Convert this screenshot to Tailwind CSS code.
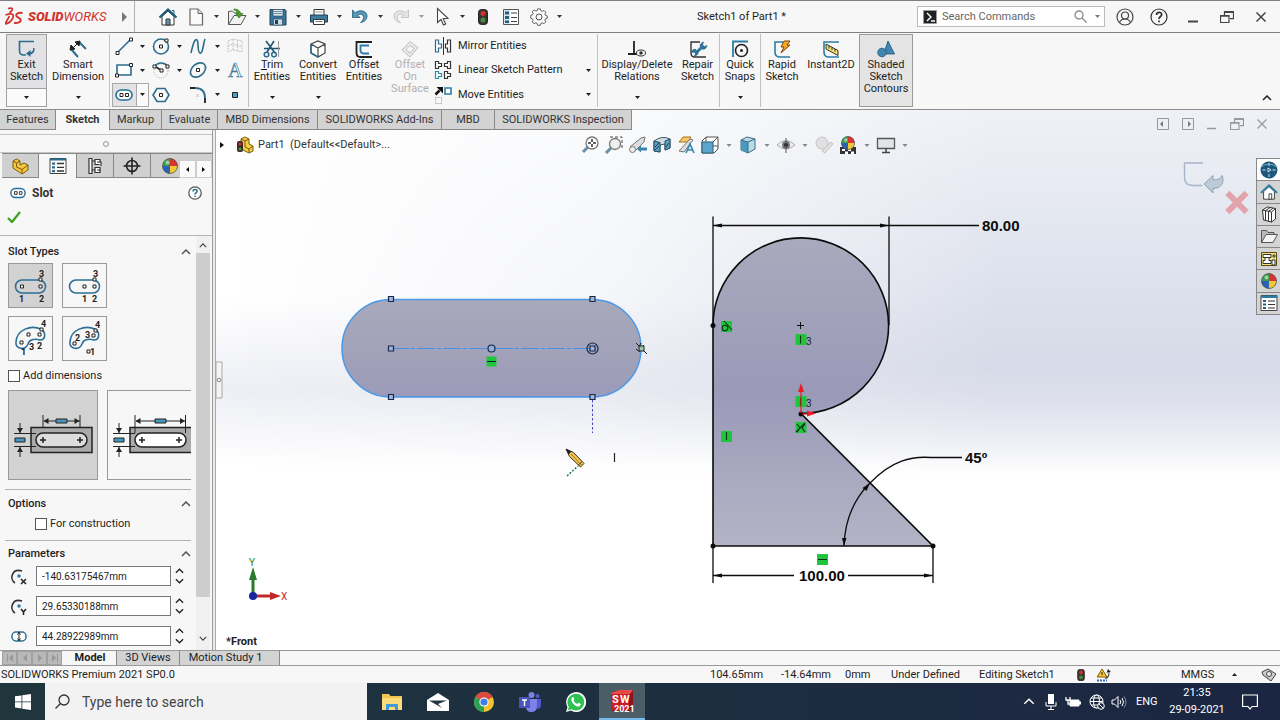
<!DOCTYPE html>
<html lang="en">

<head>
    <meta charset="UTF-8">
    <meta name="viewport" content="width=device-width, initial-scale=1.0">
    <title>SOLIDWORKS - Sketch1 of Part1</title>
    <script src="https://cdn.jsdelivr.net/npm/@tailwindcss/browser@4"></script>
</head>

<body class="h-screen overflow-hidden flex flex-col bg-[#f7f7f7] text-[#1e1e1e] text-[11px] leading-3 font-['Roboto','Open_Sans',sans-serif]">

    <!-- Shared symbols -->
    <svg class="hidden">
        <symbol id="caret" viewBox="0 0 5 3"><path d="M0 0h5L2.500 3z" fill="currentColor" /></symbol>
        <symbol id="slot" viewBox="0 0 18 12">
            <rect x="1" y="1" width="16" height="10" rx="5" fill="#fff" stroke="#1f6f9c" stroke-width="1.600" />
            <path d="M5 4.500h3v3H5zM10.500 4.500h3v3h-3z" fill="#fff" stroke="#222" />
        </symbol>
        <symbol id="up" viewBox="0 0 10 6"><path d="M1 5l4-4 4 4" fill="none" stroke="currentColor" stroke-width="1.500" /></symbol>
        <symbol id="down" viewBox="0 0 10 6"><path d="M1 1l4 4 4-4" fill="none" stroke="currentColor" stroke-width="1.500" /></symbol>
        <symbol id="traffic" viewBox="0 0 10 16">
            <rect x="0.500" y="0.500" width="9" height="15" rx="3" fill="#3b3331" stroke="#222" />
            <circle cx="5" cy="4.500" r="2.500" fill="#c8352b" />
            <circle cx="5" cy="11" r="2.500" fill="#3f8f3d" />
        </symbol>
        <symbol id="ball" viewBox="0 0 16 16">
            <circle cx="8" cy="8" r="7.500" fill="#2c62b4" />
            <path d="M8 8L8 .5A7.500 7.500 0 0 0 .5 8z" fill="#3aa14a" />
            <path d="M8 8L.5 8A7.500 7.500 0 0 0 8 15.500z" fill="#2c62b4" />
            <path d="M8 8V.5A7.500 7.500 0 0 1 15.500 8z" fill="#d93430" />
            <path d="M8 8h7.500A7.500 7.500 0 0 1 8 15.500z" fill="#efc832" />
            <circle cx="8" cy="8" r="7.500" fill="none" stroke="#444" stroke-width=".6" />
            <circle cx="5.500" cy="4.500" r="2" fill="#fff" opacity=".5" />
        </symbol>
        <symbol id="restore" viewBox="0 0 14 12">
            <path d="M4.500 4V.6h9v7H10M.5 4.500h8.500v7H.5z" fill="none" stroke="currentColor" stroke-width="1.200" />
            <path d="M4.500 1.200h9M.5 5h8.500" stroke="currentColor" stroke-width="1.500" />
        </symbol>
    </svg>

    <!-- Title bar -->
    <header class="h-[33px] shrink-0 flex items-center border-t border-b border-[#808080]">
        <div class="w-[135px] h-full flex items-center border-r border-[#b0b0b0] pl-[5px] text-[#d0342c]">
            <svg class="w-[18px] h-5" viewBox="0 0 18 20" fill="none" stroke="currentColor" stroke-width="1.700">
                <path d="M3 1.500c5-1 6 .5 1.500 4.500M.5 8c7-2.500 9-.5 7 3.500-1.500 3-4.500 5-7.500 5.500L4.500 9" />
                <path d="M17.500 6c-3.500-.8-6.300.3-6.300 2.300 0 2.400 4.800 2.400 4.600 5-.2 2.300-4.300 3.200-6.800 2.400" stroke-width="2" />
            </svg>
            <span class="ml-[5px] text-[13px] italic"><b class="font-black">SOLID</b>WORKS</span>
            <svg class="ml-auto mr-[7px] w-[5px] h-2.5" viewBox="0 0 5 10"><path d="M0 0l5 5-5 5z" fill="#777" /></svg>
        </div>
        <div class="flex items-center gap-2 pl-[23px] text-[#333]">
            <button aria-label="Home"><svg class="w-5 h-5" viewBox="0 0 20 20">
                <path d="M4 9.500V18h12V9.500L10 4z" fill="#fff" stroke="#333" />
                <path d="M1.500 10.500L10 2.500l8.500 8" fill="none" stroke="#1c5b7c" stroke-width="2.200" />
                <path d="M14 3.500h2V7" fill="none" stroke="#1c5b7c" /><path d="M8 18v-6h4v6z" fill="#5e93b0" stroke="#333" /></svg></button>
            <button aria-label="New"><svg class="w-5 h-5" viewBox="0 0 20 20"><path d="M4 2h8l4.500 4.500V18H4z" fill="#fafafa" stroke="#666" stroke-width="1.200" /><path d="M12 2v4.500h4.500" fill="#ddd" stroke="#666" /></svg></button>
            <svg class="w-[5px] h-[3px]"><use href="#caret" /></svg>
            <button aria-label="Open"><svg class="w-5 h-5" viewBox="0 0 20 20"><path d="M1.500 17.500V4.500l4-.5 2 2h6v3" fill="#eee" stroke="#555" /><path d="M1.500 17.500L7 8.500h12l-5 9z" fill="#f1f1ee" stroke="#555" /><path d="M7 2c4 0 6 1.500 6.500 4.500h2.500L12 11 8.500 6.500h2C10 4.500 9 3.500 7 3z" fill="#48a12c" stroke="#2c6d1b" stroke-width=".6" /></svg></button>
            <svg class="w-[5px] h-[3px]"><use href="#caret" /></svg>
            <button aria-label="Save"><svg class="w-5 h-5" viewBox="0 0 20 20"><path d="M2 2.500h15l1 1V18H2z" fill="#37759a" stroke="#1f4257" /><path d="M5 2.500h10V9H5z" fill="#dfe9ee" stroke="#1f4257" stroke-width=".6" /><path d="M5.500 4.500h9M5.500 6.500h9" stroke="#6b8da0" /><path d="M5.500 12h9v6h-9z" fill="#cfdbe2" stroke="#1f4257" stroke-width=".6" /><path d="M7 13h3v4H7z" fill="#1f4257" /></svg></button>
            <svg class="w-[5px] h-[3px]"><use href="#caret" /></svg>
            <button aria-label="Print"><svg class="w-5 h-5" viewBox="0 0 20 20"><path d="M5 8V2.500h10V8" fill="#fff" stroke="#333" /><path d="M1.500 8h17v7h-17z" fill="#3e7c9e" stroke="#1d3f54" /><path d="M4.500 12.500h11v5h-11z" fill="#fff" stroke="#333" /><path d="M6.500 14.500h7" stroke="#777" /><path d="M6.500 5h7" stroke="#999" /></svg></button>
            <svg class="w-[5px] h-[3px]"><use href="#caret" /></svg>
            <button aria-label="Undo"><svg class="w-5 h-5" viewBox="0 0 20 20"><path d="M2.500 3v7.500H10L7.500 8c3-1.800 6-.5 6 2.500 0 2-1 3.500-3 5 4-.5 6.500-3 6.500-6.500C17 4 10 2 5.300 5.700z" fill="#5697b8" stroke="#215a78" stroke-width=".8" /></svg></button>
            <svg class="w-[5px] h-[3px]"><use href="#caret" /></svg>
            <button aria-label="Redo"><svg class="w-5 h-5" viewBox="0 0 20 20"><path d="M17.500 3v7.500H10L12.500 8c-3-1.800-6-.5-6 2.500 0 2 1 3.500 3 5C5.500 15 3 12.500 3 9c0-5 7-7 11.700-3.300z" fill="#e4e4e4" stroke="#bbb" stroke-width=".8" /></svg></button>
            <svg class="w-[5px] h-[3px] text-[#999]"><use href="#caret" /></svg>
            <button aria-label="Select"><svg class="w-5 h-5" viewBox="0 0 20 20"><path d="M5.500 1.500v14l3.500-3 2.500 5.500 2.200-1-2.500-5.300 4.800-.4z" fill="#fff" stroke="#444" stroke-width="1.100" /></svg></button>
            <svg class="w-[5px] h-[3px]"><use href="#caret" /></svg>
            <button aria-label="Rebuild"><svg class="w-5 h-4"><use href="#traffic" /></svg></button>
            <button aria-label="File properties"><svg class="w-5 h-5" viewBox="0 0 20 20"><path d="M2.500 2.500h15v15h-15z" fill="#fff" stroke="#555" /><path d="M3 3h6v14H3z" fill="#dbe7ee" /><path d="M4 4.500h4v3H4zM4 9h4v3H4zM4 13.500h4V16H4z" fill="#245f80" /><path d="M10 6h6M10 10.500h6M10 14.500h6" stroke="#444" stroke-width="1.200" /></svg></button>
            <button aria-label="Options"><svg class="w-5 h-5" viewBox="0 0 20 20" fill="#fafafa" stroke="#555"><path d="M8.500 2.500h3l.5 2 1.600.7 1.800-1.100 2 2-1 1.900.6 1.500 2 .6v2.600l-2 .6-.7 1.500 1.100 1.900-2 2-1.800-1.100-1.600.7-.5 2h-3l-.5-2-1.600-.7-1.800 1.100-2-2 1-1.900-.6-1.500-2-.6V9.600l2-.6.7-1.500-1.100-1.900 2-2 1.800 1.100L8 4.500z" transform="translate(.8 -.4) scale(.92)" /><circle cx="10" cy="10" r="3" /></svg></button>
            <svg class="w-[5px] h-[3px]"><use href="#caret" /></svg>
        </div>
        <h1 class="flex-1 text-center pl-1">Sketch1 of Part1 *</h1>
        <label class="w-[188px] h-[21px] flex items-center border border-[#bbb] bg-white pl-[5px] pr-1">
            <svg class="w-[14px] h-[14px]" viewBox="0 0 14 14"><path d="M.5.5h13v13H.5z" fill="#222" stroke="#999" /><path d="M4 3l4 4-4 4M8 11h4" stroke="#fff" stroke-width="1.400" fill="none" /></svg>
            <input type="text" aria-label="Search Commands" placeholder="Search Commands" class="flex-1 min-w-0 ml-[5px] outline-none placeholder:text-[#666]">
            <svg class="w-[13px] h-[13px] mr-2" viewBox="0 0 13 13" fill="none" stroke="#8a8a8a" stroke-width="1.300"><circle cx="5" cy="5" r="4" /><path d="M8 8l4.500 4.500" /></svg>
            <svg class="w-[5px] h-[3px] text-[#777]"><use href="#caret" /></svg>
        </label>
        <div class="flex items-center pl-[3px] pr-0.5 text-[#444]">
            <button class="w-[34px] flex justify-center" aria-label="Account"><svg class="w-[18px] h-[18px]" viewBox="0 0 18 18" fill="none" stroke="currentColor" stroke-width="1.200"><circle cx="9" cy="9" r="8" /><circle cx="9" cy="7.500" r="3.500" /><path d="M3.500 14.500c1-2.500 3-3.500 5.500-3.500s4.500 1 5.500 3.500" /></svg></button>
            <button class="w-[34px] flex justify-center" aria-label="Help"><svg class="w-[18px] h-[18px]" viewBox="0 0 18 18" fill="none" stroke="#333" stroke-width="1.200"><circle cx="9" cy="9" r="8" /><path d="M6.500 7c0-3.500 5.200-3.300 5.200-.4C11.700 8.500 9 8.600 9 11M9 12.500v1.800" stroke-width="1.700" /></svg></button>
            <button class="w-[34px] flex justify-center" aria-label="Minimize"><svg class="w-[10px] h-3" viewBox="0 0 10 12"><path d="M0 10.500h10" stroke="currentColor" stroke-width="2" /></svg></button>
            <button class="w-[34px] flex justify-center" aria-label="Restore"><svg class="w-[14px] h-3"><use href="#restore" /></svg></button>
            <button class="w-[34px] flex justify-center" aria-label="Close"><svg class="w-[10px] h-[10px]" viewBox="0 0 10 10"><path d="M.5.5l9 9M9.500.5l-9 9" stroke="currentColor" stroke-width="1.500" /></svg></button>
        </div>
    </header>

    <!-- Command ribbon -->
    <nav class="h-[77px] shrink-0 flex border-b border-[#8c8c8c] pl-1.5 pt-px pb-0.5">
        <button class="w-[41px] flex flex-col items-center border border-[#a0a0a0] bg-[#e2e2e4]">
            <svg class="w-5 h-5 mt-1" viewBox="0 0 20 20"><path d="M17 2.500H2.500V12q0 4 4.500 4h2" fill="none" stroke="#2c6c8e" stroke-width="1.600" /><path d="M17.500 9c.5 4-1.500 6-4 6.500V18L9 14.500l4.500-3.500v2.200c2-.5 3-2 2.500-4.200z" fill="#2c6c8e" /></svg>
            <span>Exit<br>Sketch</span>
            <span class="mt-auto w-full h-[18px] flex items-center justify-center bg-[#fafafa] border-t border-[#a0a0a0]"><svg class="w-[5px] h-[3px]"><use href="#caret" /></svg></span>
        </button>
        <button class="w-[62px] flex flex-col items-center pt-[5px]">
            <svg class="w-5 h-5" viewBox="0 0 20 20"><path d="M3 10l7 8M11 3l7 7" stroke="#2c6c8e" stroke-width="2" /><path d="M4 10l7-7M3 6l-1 5 5-1zM7 3l5-1-1 5z" stroke="#222" fill="#222" /></svg>
            <span>Smart<br>Dimension</span>
            <svg class="w-[5px] h-[3px] mt-[13px]"><use href="#caret" /></svg>
        </button>
        <!-- Sketch entity tools -->
        <div class="w-[140px] border-l border-r border-[#c0c0c0] grid grid-cols-[28px_9px_28px_9px_28px_10px_26px] grid-rows-3 items-center justify-items-center">
            <button aria-label="Line"><svg class="w-5 h-5" viewBox="0 0 20 20"><path d="M3.500 16.500l13-13" stroke="#2c6c8e" stroke-width="1.600" /><path d="M2 15.500h3v3H2zM15.500 2h3v3h-3z" fill="#fff" stroke="#222" /></svg></button>
            <svg class="w-[5px] h-[3px]"><use href="#caret" /></svg>
            <button aria-label="Circle"><svg class="w-5 h-5" viewBox="0 0 20 20"><circle cx="10" cy="10.500" r="7.500" fill="none" stroke="#2c6c8e" stroke-width="1.600" /><path d="M8.500 9h3v3h-3zM14 3h3v3h-3z" fill="#fff" stroke="#222" /></svg></button>
            <svg class="w-[5px] h-[3px]"><use href="#caret" /></svg>
            <button aria-label="Spline"><svg class="w-5 h-5" viewBox="0 0 20 20"><path d="M3 17C5 8 7 2 9 4s0 12 3 13 3-9 5-14" fill="none" stroke="#2c6c8e" stroke-width="1.600" /></svg></button>
            <svg class="w-[5px] h-[3px]"><use href="#caret" /></svg>
            <button aria-label="Plane"><svg class="w-5 h-5" viewBox="0 0 20 20"><path d="M3 5l5-2 9 2v11l-9-2-5 2zM8 3v11M12.500 4v11M3 10l5-2 9 3" fill="none" stroke="#c4c4c4" stroke-dasharray="2 1" /></svg></button>

            <button aria-label="Rectangle"><svg class="w-5 h-5" viewBox="0 0 20 20"><path d="M3 5h14v10H3z" fill="#fff" stroke="#2c6c8e" stroke-width="1.600" /><path d="M1.500 14h3v3h-3zM15.500 3.500h3v3h-3z" fill="#fff" stroke="#222" /></svg></button>
            <svg class="w-[5px] h-[3px]"><use href="#caret" /></svg>
            <button aria-label="Arc"><svg class="w-5 h-5" viewBox="0 0 20 20"><circle cx="10" cy="11" r="7" fill="none" stroke="#aaa" stroke-dasharray="1 1.500" /><path d="M3.500 6.500C7 2 13 2 16.500 6" fill="none" stroke="#2c6c8e" stroke-width="1.600" /><path d="M2 5h3v3H2zM15 5h3v3h-3zM9 9h3v3H9z" fill="#fff" stroke="#222" /><path d="M5 7l4 2.500" stroke="#222" stroke-width="1.500" /></svg></button>
            <svg class="w-[5px] h-[3px]"><use href="#caret" /></svg>
            <button aria-label="Ellipse"><svg class="w-5 h-5" viewBox="0 0 20 20"><ellipse cx="10" cy="10" rx="8.500" ry="6" transform="rotate(-40 10 10)" fill="none" stroke="#2c6c8e" stroke-width="1.600" /><path d="M8.500 8.500h3v3h-3z" fill="#fff" stroke="#222" /></svg></button>
            <svg class="w-[5px] h-[3px]"><use href="#caret" /></svg>
            <button aria-label="Text"><svg class="w-5 h-5" viewBox="0 0 20 20"><text x="3" y="17" font-family="Liberation Serif" font-size="20" fill="#fff" stroke="#3b7797" stroke-width=".7">A</text></svg></button>

            <button aria-label="Slot" class="w-[25px] h-6 flex items-center justify-center border border-[#a8a8a8] bg-[#e2e2e4]"><svg class="w-[18px] h-3"><use href="#slot" /></svg></button>
            <span class="w-3 h-6 flex items-center justify-center border border-l-0 border-[#a8a8a8] bg-[#fafafa]"><svg class="w-[5px] h-[3px]"><use href="#caret" /></svg></span>
            <button aria-label="Polygon"><svg class="w-5 h-5" viewBox="0 0 20 20"><path d="M6 3.500h8l4 6.500-4 6.500H6L2 10z" fill="none" stroke="#2c6c8e" stroke-width="1.600" /><path d="M8.500 8.500h3v3h-3z" fill="#fff" stroke="#222" /></svg></button>
            <span></span>
            <button aria-label="Fillet"><svg class="w-5 h-5" viewBox="0 0 20 20" fill="none"><path d="M2 3h5M17 13v5" stroke="#222" stroke-width="1.800" /><path d="M7 3q10 0 10 10" stroke="#2c6c8e" stroke-width="1.800" /><path d="M8 9l3 3M11 9l-3 3" stroke="#bbb" stroke-width=".8" /></svg></button>
            <svg class="w-[5px] h-[3px]"><use href="#caret" /></svg>
            <button aria-label="Point"><svg class="w-1.5 h-1.5" viewBox="0 0 6 6"><path d="M.5.5h5v5h-5z" fill="#4f9fc8" stroke="#222" /></svg></button>
        </div>
        <button class="w-[46px] flex flex-col items-center pt-[5px]">
            <svg class="w-5 h-5" viewBox="0 0 20 20"><path d="M4 2l9 12M12 2L5 13M2 9.500h16" stroke="#1f5674" stroke-width="1.600" /><path d="M16.500 2v16" stroke="#999" /><circle cx="4.500" cy="15.500" r="2.300" fill="none" stroke="#2c6c8e" stroke-width="1.500" /><circle cx="12" cy="15.500" r="2.300" fill="none" stroke="#2c6c8e" stroke-width="1.500" /></svg>
            <span><u>T</u>rim<br>Entities</span>
            <svg class="w-[5px] h-[3px] mt-[13px]"><use href="#caret" /></svg>
        </button>
        <button class="w-[46px] flex flex-col items-center pt-[5px]">
            <svg class="w-5 h-5" viewBox="0 0 20 20"><path d="M3 5l7-3 7 3v9l-7 4-7-4zM3 5l7 4 7-4M10 9v9" fill="#fff" stroke="#444" stroke-width="1.200" /><path d="M3 5v9l7 4" stroke="#2c6c8e" stroke-width="1.500" fill="none" /></svg>
            <span>Convert<br>Entities</span>
            <svg class="w-[5px] h-[3px] mt-[13px]"><use href="#caret" /></svg>
        </button>
        <button class="w-[46px] flex flex-col items-center pt-[5px]">
            <svg class="w-5 h-5" viewBox="0 0 20 20" fill="none"><path d="M18 3H2.500v11q0 4 4 4H18" stroke="#222" stroke-width="1.800" /><path d="M15 6.500H6.500v4.500q0 3.500 3 3.500H15" stroke="#2c7da5" stroke-width="1.800" /></svg>
            <span>Offset<br>Entities</span>
        </button>
        <button disabled class="w-[46px] flex flex-col items-center pt-[5px] text-[#b0b0b0]">
            <svg class="w-5 h-5" viewBox="0 0 20 20" fill="#e8e8e8" stroke="#bdbdbd"><path d="M2 11l8-8.500 8 6L10 18z" /><path d="M6 10.500l4-4 4 3-4 4.500z" fill="#f7f7f7" /></svg>
            <span>Offset<br>On<br>Surface</span>
        </button>
        <div class="flex-none w-[165px] border-r border-[#c0c0c0] grid grid-cols-[20px_1fr_18px] grid-rows-3 items-center">
            <svg class="w-5 h-5" viewBox="0 0 20 20" fill="#fff"><path d="M2.500 4h3v4h3v4h-3v4h-3z" stroke="#2c6c8e" stroke-width="1.200" /><path d="M17.500 4h-3v4h-2v4h2v4h3z" stroke="#333" stroke-width="1.200" /><path d="M10.500 1v18" stroke="#333" /></svg>
            <button class="text-left pl-[5px]">Mirror Entities</button>
            <span></span>
            <svg class="w-5 h-5" viewBox="0 0 20 20" fill="#fff" stroke="#333" stroke-width="1.200"><path d="M2.500 1.500h3v2h3v3h-3v2h-3zM17.500 1.500h-3v2h-3v3h3v2h3zM11.500 11.500h3v2h3v3h-3v2h-3z" /><path d="M2.500 11.500h3v2h3v3h-3v2h-3z" stroke="#2c8cae" /></svg>
            <button class="text-left pl-[5px]">Linear Sketch Pattern</button>
            <svg class="w-[5px] h-[3px] ml-[7px]"><use href="#caret" /></svg>
            <svg class="w-5 h-5" viewBox="0 0 20 20"><path d="M2.500 9.500l4-4" stroke="#111" stroke-width="2.500" /><path d="M3.500 2H10v6.500z" fill="#111" /><path d="M12 3h6v6h-6z" fill="#fff" stroke="#2c7da5" stroke-width="1.600" /><path d="M2.500 12.500h6v6h-6z" fill="none" stroke="#999" stroke-dasharray="1 1" /></svg>
            <button class="text-left pl-[5px]">Move Entities</button>
            <svg class="w-[5px] h-[3px] ml-[7px]"><use href="#caret" /></svg>
        </div>
        <button class="w-[78px] flex flex-col items-center pt-[5px]">
            <svg class="w-5 h-5" viewBox="0 0 20 20"><path d="M7 2v13M1 15h10" stroke="#222" stroke-width="1.800" /><ellipse cx="14" cy="14" rx="4.500" ry="3" fill="#fff" stroke="#333" /><circle cx="14" cy="14" r="1.800" fill="#333" /></svg>
            <span>Display/Delete<br>Relations</span>
            <svg class="w-[5px] h-[3px] mt-[13px]"><use href="#caret" /></svg>
        </button>
        <button class="w-[44px] flex flex-col items-center pt-[5px] border-r border-[#c0c0c0]">
            <svg class="w-5 h-5" viewBox="0 0 20 20"><path d="M12 3H3v11q0 4 4 4h11" fill="none" stroke="#333" stroke-width="1.400" /><path d="M8 14l6.500-6.500" stroke="#2f76a0" stroke-width="2.800" /><path d="M12.500 8.500q-1.500-4 3-5.500l-1 3 2 1.500 2.500-1q-1 4.500-5 3.500M9.500 12q2 4-3 5l1-2.500-1.500-1.500-2.500.5q1-4 4.500-3" fill="#2f76a0" stroke="#1f5674" stroke-width=".6" /></svg>
            <span>Repair<br>Sketch</span>
        </button>
        <button class="w-[41px] flex flex-col items-center pt-[5px] border-r border-[#c0c0c0]">
            <svg class="w-5 h-5" viewBox="0 0 20 20" fill="none"><path d="M18 2.500H3V18" stroke="#2c7da5" stroke-width="1.800" /><circle cx="11.500" cy="11.500" r="6" stroke="#222" stroke-width="1.600" /><circle cx="11.500" cy="11.500" r="1.500" fill="#222" /></svg>
            <span>Quick<br>Snaps</span>
            <svg class="w-[5px] h-[3px] mt-[13px]"><use href="#caret" /></svg>
        </button>
        <button class="w-[42px] flex flex-col items-center pt-[5px]">
            <svg class="w-5 h-5" viewBox="0 0 20 20"><path d="M11 3H3v10q0 5 5 5h10" fill="none" stroke="#2c7da5" stroke-width="1.600" /><path d="M12 2h6l-3 4h3L9 14l3-6H9z" fill="#f6a823" stroke="#7a4311" /></svg>
            <span>Rapid<br>Sketch</span>
        </button>
        <button class="w-14 flex flex-col items-center pt-[5px]">
            <svg class="w-5 h-5" viewBox="0 0 20 20"><path d="M18 3H3v10q0 5 5 5h10" fill="none" stroke="#2c7da5" stroke-width="1.600" /><path d="M5 5l12 6.500v5L5 10z" fill="#f3df6b" stroke="#333" /><path d="M8 7v2.500M11 8.500V11M14 10v2.500" stroke="#333" /></svg>
            <span>Instant2D</span>
        </button>
        <button class="w-[54px] flex flex-col items-center pt-1 border border-[#9a9a9a] bg-[#e4e4e4]">
            <svg class="w-5 h-5" viewBox="0 0 20 20" fill="#3f87b0" stroke="#1f5674" stroke-width=".8"><path d="M12 2l6.500 13h-11z" /><circle cx="6" cy="13.500" r="4.300" /></svg>
            <span>Shaded<br>Sketch<br>Contours</span>
        </button>
        <button class="ml-auto mr-2 self-end mb-1.5" aria-label="Collapse ribbon"><svg class="w-[10px] h-1.5"><use href="#up" /></svg></button>
    </nav>

    <!-- Work area -->
    <main class="flex-1 min-h-0 flex flex-col relative bg-linear-to-b from-[#eef1f6] via-[#d6dae8] via-48% to-white to-68%">
        <div class="absolute inset-0 bg-linear-to-r from-white from-18% via-white/70 via-48% to-transparent to-78%"></div>
        <div class="absolute inset-0 bg-linear-to-b from-transparent from-35% via-[#d8dbe8]/45 via-52% to-transparent to-66%"></div>

        <!-- Command tabs and document window controls -->
        <div class="relative h-5 shrink-0 flex text-[#333]">
            <button class="w-[56px] bg-[#d3d3d3] border-r border-b border-[#888]">Features</button>
            <button class="w-[53px] bg-[#f7f7f7] font-bold">Sketch</button>
            <button class="w-[53px] bg-[#d3d3d3] border-l border-r border-b border-[#888]">Markup</button>
            <button class="w-[56px] bg-[#d3d3d3] border-r border-b border-[#888]">Evaluate</button>
            <button class="w-[100px] bg-[#d3d3d3] border-r border-b border-[#888]">MBD Dimensions</button>
            <button class="w-[124px] bg-[#d3d3d3] border-r border-b border-[#888]">SOLIDWORKS Add-Ins</button>
            <button class="w-[53px] bg-[#d3d3d3] border-r border-b border-[#888]">MBD</button>
            <button class="w-[137px] bg-[#d3d3d3] border-r border-b border-[#888]">SOLIDWORKS Inspection</button>
            <div class="ml-auto mr-[13px] mt-2 flex items-center gap-[13px] text-[#999]">
                <button aria-label="Tile left"><svg class="w-3 h-3" viewBox="0 0 12 12"><path d="M.5.5h11v11H.5z" fill="none" stroke="currentColor" /><path d="M6 3v6L3 6z" fill="#777" /></svg></button>
                <button aria-label="Tile right"><svg class="w-3 h-3" viewBox="0 0 12 12"><path d="M.5.5h11v11H.5z" fill="none" stroke="currentColor" /><path d="M6 3v6l3-3z" fill="#777" /></svg></button>
                <button aria-label="Minimize document"><svg class="w-[10px] h-3" viewBox="0 0 10 12"><path d="M0 10.500h9" stroke="currentColor" stroke-width="1.500" /></svg></button>
                <button aria-label="Restore document"><svg class="w-[14px] h-3"><use href="#restore" /></svg></button>
                <button aria-label="Close document"><svg class="w-[10px] h-[10px]" viewBox="0 0 10 10"><path d="M.5.5l9 9M9.500.5l-9 9" stroke="currentColor" stroke-width="1.300" /></svg></button>
            </div>
        </div>

        <div class="relative flex-1 min-h-0 flex">
            <!-- PropertyManager -->
            <aside class="w-[213px] shrink-0 bg-[#f7f7f7] border-r border-[#999] flex flex-col">
                <div class="h-[19px] mt-1 shrink-0 border-t border-b border-[#c4c4c4] flex justify-center items-center"><span class="size-1.5 rounded-full border border-[#999]"></span></div>
                <div class="h-[25px] shrink-0 ml-0.5 flex border-t border-[#888]">
                    <button class="w-[37px] bg-[#d0d0d0] border-r border-b border-[#888] flex items-center justify-center" aria-label="FeatureManager"><svg class="w-[18px] h-[18px]" viewBox="0 0 18 18"><path d="M2 4l3.500-2L9 4v4l4-2 4 2v5l-6 4L2 11z" fill="#f5c83b" stroke="#7a5a11" /><path d="M2 4l3.500 2L9 4M5.500 6v4l5.500 2.500 6-4.500M11 12.500V17" fill="none" stroke="#7a5a11" /></svg></button>
                    <button class="w-[37px] flex items-center justify-center" aria-label="PropertyManager"><svg class="w-[18px] h-[18px]" viewBox="0 0 18 18"><path d="M1 1.500h16v15H1z" fill="#fff" stroke="#444" /><path d="M1 1.500h16v2H1z" fill="#2c6c8e" /><path d="M3 5.500h3v2.200H3zM3 9.200h3v2.200H3zM3 13h3v2.200H3z" fill="#2c6c8e" /><path d="M8 6.500h7M8 10.300h7M8 14h7" stroke="#333" stroke-width="1.300" /></svg></button>
                    <button class="w-[38px] bg-[#d0d0d0] border-l border-r border-b border-[#888] flex items-center justify-center" aria-label="ConfigurationManager"><svg class="w-[18px] h-[18px]" viewBox="0 0 18 18" fill="#fff" stroke="#333" stroke-width="1.200"><path d="M3 1.500h3v15H3zM6 4h3M6 13h3M9 2.500h5v5H9zM9 10.500h5v5H9z" /><path d="M11 5h4v4M11 13h4" /></svg></button>
                    <button class="w-[37px] bg-[#d0d0d0] border-r border-b border-[#888] flex items-center justify-center" aria-label="DimXpertManager"><svg class="w-[18px] h-[18px]" viewBox="0 0 18 18" fill="none" stroke="#222" stroke-width="1.600"><circle cx="9" cy="9" r="5.500" /><path d="M9 .5v17M.5 9h17" /></svg></button>
                    <button class="w-[28px] bg-[#d0d0d0] border-b border-[#888] flex items-center pl-[11px] overflow-hidden" aria-label="DisplayManager"><svg class="w-4 h-4 shrink-0"><use href="#ball" /></svg></button>
                    <div class="flex-1 flex pt-1.5 bg-[#d0d0d0]">
                        <button class="flex-1 flex items-center justify-center bg-[#fafafa] border border-[#ccc]" aria-label="Scroll tabs left"><svg class="w-[3px] h-[5px]" viewBox="0 0 3 5"><path d="M3 0v5L0 2.500z" /></svg></button>
                        <button class="flex-1 flex items-center justify-center bg-[#fafafa] border border-[#ccc]" aria-label="Scroll tabs right"><svg class="w-[3px] h-[5px]" viewBox="0 0 3 5"><path d="M0 0v5l3-2.500z" /></svg></button>
                    </div>
                </div>
                <div class="h-[58px] shrink-0 px-2.5 pt-2 border-b border-[#b4b4b4]">
                    <div class="flex items-center">
                        <svg class="w-4 h-3"><use href="#slot" /></svg>
                        <h2 class="ml-1.5 text-[12px] font-bold text-[#333]">Slot</h2>
                        <button class="ml-auto" aria-label="Panel help"><svg class="w-3.5 h-3.5" viewBox="0 0 18 18" fill="none"><circle cx="9" cy="9" r="8" fill="#fff" stroke="#555" stroke-width="1.600" /><path d="M6.500 7c0-3.500 5.200-3.300 5.200-.4C11.700 8.500 9 8.600 9 11M9 12.500v1.800" stroke="#2c6c8e" stroke-width="2" /></svg></button>
                    </div>
                    <button class="block mt-[11px] -ml-[3px]" aria-label="OK"><svg class="w-3.5 h-3" viewBox="0 0 14 12"><path d="M1 7l4 4L13 1" fill="none" stroke="#3da01f" stroke-width="2.200" /></svg></button>
                </div>
                <div class="flex-1 min-h-0 flex">
                    <div class="flex-1 min-w-0 overflow-hidden pl-2 pr-[5px]">
                        <div class="h-[27px] flex items-center justify-between pt-1"><h3 class="font-medium">Slot Types</h3><svg class="w-[10px] h-1.5 text-[#555]"><use href="#up" /></svg></div>
                        <div class="w-[99px] grid grid-cols-2 gap-x-[9px] gap-y-2">
                            <button class="h-[45px] bg-[#d2d2d2] border border-[#999]" aria-label="Straight slot"><svg class="w-full h-full" viewBox="0 0 43 43"><rect x="6.500" y="16" width="30" height="13" rx="6.500" fill="none" stroke="#2c7095" stroke-width="1.600" /><path d="M11.500 21h3v3h-3zM30 21h3v3h-3zM30 14h3v3h-3z" fill="#fff" stroke="#222" /><text font-family="Roboto" font-weight="700" font-size="9" fill="#222"><tspan x="30" y="13">3</tspan><tspan x="10" y="38">1</tspan><tspan x="30" y="38">2</tspan></text></svg></button>
                            <button class="h-[45px] border border-[#999]" aria-label="Centerpoint straight slot"><svg class="w-full h-full" viewBox="0 0 43 43"><rect x="6.500" y="16" width="30" height="13" rx="6.500" fill="none" stroke="#2c7095" stroke-width="1.600" /><path d="M20 21h3v3h-3zM30 21h3v3h-3zM30 14h3v3h-3z" fill="#fff" stroke="#222" /><text font-family="Roboto" font-weight="700" font-size="9" fill="#222"><tspan x="30" y="13">3</tspan><tspan x="19" y="38">1</tspan><tspan x="29" y="38">2</tspan></text></svg></button>
                            <button class="h-[45px] border border-[#999]" aria-label="3 point arc slot"><svg class="w-full h-full" viewBox="0 0 43 43"><path d="M7 25C8 12 22 8 32 12c5 3 5 11-1 11-6-2-11 0-12 4-3 7-13 5-12-2z" fill="none" stroke="#2c7095" stroke-width="1.600" /><path d="M11 24h3v3h-3zM18 16h3v3h-3zM29 16h3v3h-3zM31 11h3v3h-3z" fill="#fff" stroke="#222" /><text font-family="Roboto" font-weight="700" font-size="9" fill="#222"><tspan x="32" y="10">4</tspan><tspan x="12" y="38">1</tspan><tspan x="20" y="33">3</tspan><tspan x="28" y="32">2</tspan></text></svg></button>
                            <button class="h-[45px] border border-[#999]" aria-label="Centerpoint arc slot"><svg class="w-full h-full" viewBox="0 0 43 43"><path d="M7 25C8 12 22 8 32 12c5 3 5 11-1 11-6-2-11 0-12 4-3 7-13 5-12-2z" fill="none" stroke="#2c7095" stroke-width="1.600" /><path d="M10 25h3v3h-3zM29 17h3v3h-3zM31 12h3v3h-3zM24 33h3v3h-3z" fill="#fff" stroke="#222" /><text font-family="Roboto" font-weight="700" font-size="9" fill="#222"><tspan x="32" y="11">4</tspan><tspan x="27" y="38">1</tspan><tspan x="22" y="21">3</tspan><tspan x="12" y="24">2</tspan></text></svg></button>
                        </div>
                        <label class="h-[29px] flex items-center gap-[3px]"><input type="checkbox" class="appearance-none size-3 bg-white border border-[#555]">Add dimensions</label>
                        <div class="flex gap-[9px] h-[90px]">
                            <button class="w-[90px] shrink-0 bg-[#d2d2d2] border border-[#999]" aria-label="Center to center"><svg class="w-[88px] h-[88px]" viewBox="0 0 88 88" fill="none" stroke="#222">
                                <path d="M22 36.500h61v25H22z" fill="#aaa" stroke-width="1.500" /><rect x="27" y="42" width="51" height="14" rx="7" fill="#ddd" stroke-width="1.500" />
                                <path d="M31 49h6M34 46v6M68 49h6M71 46v6" stroke-width="1.500" /><path d="M34 24v12M71 24v12M35 30h36M5 42.500h22M5 55.500h22M11 32v10M11 56v10" />
                                <path d="M34.500 30l5-3v6zM70.500 30l-5-3v6zM11 42l-3-5h6zM11 56l-3 5h6z" fill="#222" stroke="none" /><path d="M47 28h11v4H47zM6 47h10v4H6z" fill="#4796bd" /></svg></button>
                            <button class="flex-1 min-w-0 overflow-hidden border border-r-0 border-[#999]" aria-label="Overall length"><svg class="w-[88px] h-[88px]" viewBox="0 0 88 88" fill="none" stroke="#222">
                                <path d="M22 36.500h65v25H22z" fill="#aaa" stroke-width="1.500" /><rect x="27" y="42" width="51" height="14" rx="7" fill="#fff" stroke-width="1.500" />
                                <path d="M31 49h6M34 46v6M68 49h6M71 46v6" stroke-width="1.500" /><path d="M27 24v18M77.500 24v18M28 30h49M5 42.500h22M5 55.500h22M11 32v10M11 56v10" />
                                <path d="M27.500 30l5-3v6zM77 30l-5-3v6zM11 42l-3-5h6zM11 56l-3 5h6z" fill="#222" stroke="none" /><path d="M47 28h11v4H47zM6 47h10v4H6z" fill="#4796bd" /></svg></button>
                        </div>
                        <div class="mt-[9px] -ml-[3px] pl-[3px] border-t border-[#b4b4b4]">
                            <div class="h-7 flex items-center justify-between"><h3 class="font-medium">Options</h3><svg class="w-[10px] h-1.5 text-[#555]"><use href="#up" /></svg></div>
                            <label class="ml-[27px] flex items-center gap-[3px]"><input type="checkbox" class="appearance-none size-3 bg-white border border-[#555]">For construction</label>
                        </div>
                        <div class="mt-[10px] -ml-[3px] pl-[3px] border-t border-[#b4b4b4]">
                            <div class="h-[25px] flex items-center justify-between"><h3 class="font-medium">Parameters</h3><svg class="w-[10px] h-1.5 text-[#555]"><use href="#up" /></svg></div>
                            <div class="flex flex-col gap-[10px] text-[10px] text-[#222]">
                                <label class="flex items-center"><svg class="w-5 h-5 mr-2" viewBox="0 0 20 20"><path d="M7 17C1 13 4 2 14 5" fill="none" stroke="#333" stroke-width="1.600" /><circle cx="11" cy="10" r="1.800" fill="#2c7da5" /><path d="M13 13l5 5M18 13l-5 5" stroke="#222" stroke-width="1.500" /></svg><input type="text" aria-label="Center X" value="-140.63175467mm" class="w-[135px] h-5 px-[5px] bg-white border border-[#777]"><span class="ml-1 flex flex-col gap-1"><svg class="w-[9px] h-1.5"><use href="#up" /></svg><svg class="w-[9px] h-1.5"><use href="#down" /></svg></span></label>
                                <label class="flex items-center"><svg class="w-5 h-5 mr-2" viewBox="0 0 20 20"><path d="M7 17C1 13 4 2 14 5" fill="none" stroke="#333" stroke-width="1.600" /><circle cx="11" cy="10" r="1.800" fill="#2c7da5" /><path d="M13 13l2.500 3 2.500-3M15.500 16v3" fill="none" stroke="#222" stroke-width="1.500" /></svg><input type="text" aria-label="Center Y" value="29.65330188mm" class="w-[135px] h-5 px-[5px] bg-white border border-[#777]"><span class="ml-1 flex flex-col gap-1"><svg class="w-[9px] h-1.5"><use href="#up" /></svg><svg class="w-[9px] h-1.5"><use href="#down" /></svg></span></label>
                                <label class="flex items-center"><svg class="w-5 h-5 mr-2" viewBox="0 0 20 20"><rect x="4" y="6" width="14" height="9" rx="4" fill="#fff" stroke="#2c7095" stroke-width="1.500" /><path d="M11 6v9M9.500 8.500L11 6.500l1.500 2M9.500 12.500l1.500 2 1.500-2" fill="none" stroke="#222" /></svg><input type="text" aria-label="Slot width" value="44.28922989mm" class="w-[135px] h-5 px-[5px] bg-white border border-[#777]"><span class="ml-1 flex flex-col gap-1"><svg class="w-[9px] h-1.5"><use href="#up" /></svg><svg class="w-[9px] h-1.5"><use href="#down" /></svg></span></label>
                            </div>
                        </div>
                    </div>
                    <!-- Panel scrollbar -->
                    <div class="w-[14px] mr-0.5 flex flex-col items-center bg-[#f0f0f0] text-[#444]">
                        <svg class="w-2 h-[5px] mt-[7px] mb-[5px]"><use href="#up" /></svg>
                        <div class="w-full h-[83%] bg-[#cdcdcd]"></div>
                        <svg class="w-2 h-[5px] mt-auto mb-[9px]"><use href="#down" /></svg>
                    </div>
                </div>
            </aside>

            <!-- Splitter -->
            <div class="w-[3px] bg-[#ededed] border-r border-[#aaa]"></div>

            <!-- Graphics area -->
            <section class="relative flex-1 min-w-0">
                <svg class="absolute inset-0 w-full h-full" viewBox="216 130 1064 520" preserveAspectRatio="xMinYMin meet">
                    <defs>
                        <linearGradient id="face" x1="0" y1="0" x2="0" y2="1"><stop offset="0" stop-color="#a9aabd" /><stop offset=".5" stop-color="#9a9ab8" /><stop offset="1" stop-color="#b4b4c6" /></linearGradient>
                        <linearGradient id="slotface" x1="0" y1="0" x2="0" y2="1"><stop offset="0" stop-color="#a9a9bb" /><stop offset="1" stop-color="#9b9bb9" /></linearGradient>
                    </defs>
                    <!-- Panel flyout handle -->
                    <path d="M216 362h6v36h-6z" fill="#f4f4f4" stroke="#aaa" /><circle cx="219" cy="380" r="1.800" fill="none" stroke="#888" />

                    <!-- Slot -->
                    <rect x="342" y="299.500" width="299" height="97.500" rx="48.750" fill="url(#slotface)" stroke="#4a98e8" stroke-width="1.500" />
                    <path d="M391 348.500h201" stroke="#4a90e0" stroke-dasharray="18 2 4 2" />
                    <path d="M592.500 400v33" stroke="#4846c8" stroke-dasharray="2.500 2" />
                    <g fill="none" stroke="#15294d" stroke-width="1.200"><path d="M388.500 296.500h5v5h-5zM590 296.500h5v5h-5zM388.500 346h5v5h-5zM590 346h5v5h-5zM388.500 394.500h5v5h-5zM590 394.500h5v5h-5z" fill="#a3b2d8" /><circle cx="491.500" cy="348.500" r="3.500" fill="#8fb0d8" /><circle cx="592.500" cy="348.500" r="5.500" /></g>
                    <path d="M636 343l11 11M641 343l-2 4M636 349l4 3M644 345l-3 4" fill="none" stroke="#222" /><path d="M639 346h5v5h-5z" fill="#9cc8a8" stroke="#222" />
                    <path d="M486.500 356.500h10v10h-10z" fill="#1fc63c" /><path d="M487 361.500h9" stroke="#123" />

                    <!-- Pencil cursor -->
                    <path d="M566 449l3.500 7.500 11 10.500 3.500-3.500-10.500-11z" fill="#f2c64d" stroke="#333" /><path d="M566 449l2.500 5.500 3-3z" fill="#222" /><path d="M571 454l10.500 11" stroke="#a87918" /><path d="M578.500 465l3.500-3.500" stroke="#333" /><path d="M567 476l11-10" stroke="#237c50" stroke-width="1.500" stroke-dasharray="2 1.500" /><path d="M614.500 453v9" stroke="#222" stroke-width="1.200" />

                    <!-- P profile -->
                    <path d="M713 326A87.800 87.800 0 1 1 801 413.500L933 546H713z" fill="url(#face)" stroke="#0c0c0c" stroke-width="1.600" />
                    <g fill="#0c0c0c"><circle cx="713" cy="325.500" r="2.500" /><circle cx="713" cy="546" r="2.500" /><circle cx="933" cy="546" r="2.500" /><circle cx="801" cy="414" r="2.500" /></g>
                    <path d="M797 325.500h7M800.500 322v7" stroke="#111" />

                    <!-- Dimensions -->
                    <g fill="none" stroke="#0c0c0c" stroke-width="1.300"><path d="M713 216.500V325M889 216.500V325M713 225.500h266M713 546v37M933 546v37M713 575.500h81M848 575.500h85M844 546C845 516 856 497 870 483 892 460 912 456 931 457.500h31" /></g>
                    <path d="M713 225.500l9-2v4zM889 225.500l-9-2v4zM713 575.500l9-2v4zM933 575.500l-9-2v4zM844 546l-2-8h4.500zM870 483l-7.500 5 4 3z" fill="#0c0c0c" />
                    <g font-family="Liberation Sans" font-weight="700" font-size="15" fill="#0c0c0c"><text x="982" y="231">80.00</text><text x="799" y="581">100.00</text><text x="965" y="463">45º</text></g>

                    <!-- Relations -->
                    <path d="M721 321h11v11h-11zM721 431h11v11h-11zM795.500 334h11v11h-11zM795.500 396h11v11h-11zM795.500 422h11v11h-11zM817 554h11v11h-11z" fill="#1fc63c" />
                    <g fill="none" stroke="#103018" stroke-width="1.100"><circle cx="725" cy="328" r="2.800" /><path d="M724 321l8 9M726.500 432v8M800.500 335.500v8M800.500 398v8M818 559.500h9M797 424l3 4-3 4M805 424l-3 4 3 4M796 432l9-9" /></g>
                    <g font-family="Roboto" font-size="10" fill="#222"><text x="806" y="345">3</text><text x="806" y="407">3</text></g>
                    <path d="M801 413V390M802 414h9" stroke="#ec1c24" stroke-width="1.200" /><path d="M801 383l-3 9h6zM816 413.500l-9-3v6z" fill="#ec1c24" />

                    <!-- Orientation triad -->
                    <path d="M253 596v-17" stroke="#2b7a2b" stroke-width="3" /><path d="M253 567l-4 13h8z" fill="#2b7a2b" /><path d="M253 596h17" stroke="#c22a2a" stroke-width="3" /><path d="M281 596l-11-4v8z" fill="#c22a2a" /><circle cx="253" cy="596" r="4" fill="#17269a" />
                    <g font-family="Roboto" font-size="10"><text x="249" y="566" fill="#2b7a2b">Y</text><text x="281" y="600" fill="#c22a2a">X</text></g>

                    <!-- Confirmation corner -->
                    <path d="M1203 163h-18.500v14q0 8.500 8 8.500h10" fill="none" stroke="#a7b3c6" stroke-width="1.400" /><path d="M1204 184l9-8.500v4.500c5 0 8-1.500 9-4.500 3 7-1 13-9 13v4.500z" fill="#bccbd8" stroke="#8fa3b5" /><path d="M1229.500 195l15 15M1244.500 195l-15 15" stroke="#e3a3aa" stroke-width="6" stroke-linecap="square" />
                </svg>

                <div class="relative h-[30px] flex items-center pr-[370px] text-[#333]">
                    <svg class="w-1 h-1.5 ml-1" viewBox="0 0 4 6"><path d="M0 0l4 3-4 3z" fill="#111" /></svg>
                    <svg class="w-[18px] h-[18px] ml-3" viewBox="0 0 18 18"><path d="M5 3l4-2 4 2v5l4 2v5l-4 2-8-4z" fill="#f5cf45" stroke="#7a5a11" /><path d="M5 3l4 2 4-2M9 5v6l4 2 4-3M13 13v4" fill="none" stroke="#7a5a11" /><rect x="1" y="5" width="6" height="11" rx="2" fill="#3b2a28" /><circle cx="4" cy="8" r="1.600" fill="#d93430" /><circle cx="4" cy="13" r="1.600" fill="#3f9a3d" /></svg>
                    <span class="ml-1 whitespace-pre">Part1  (Default&lt;&lt;Default&gt;...</span>
                    <!-- Heads-up view toolbar -->
                    <div class="ml-auto flex items-center gap-1 text-[#888]">
                        <button aria-label="Zoom to fit"><svg class="w-5 h-5" viewBox="0 0 20 20"><path d="M9 11l-6 6" stroke="#6790ab" stroke-width="3" /><circle cx="12" cy="8" r="6" fill="#fff" stroke="#777" stroke-width="1.300" /><path d="M12 4v3M12 9v3M8 8h3M13 8h3" stroke="#333" stroke-width="1.500" /></svg></button>
                        <button aria-label="Zoom to area"><svg class="w-5 h-5" viewBox="0 0 20 20"><path d="M6 2h12v12" fill="none" stroke="#444" stroke-dasharray="3 2" /><path d="M8 12l-6 6" stroke="#6790ab" stroke-width="3" /><circle cx="11" cy="9" r="5.500" fill="#eee" stroke="#777" stroke-width="1.300" /></svg></button>
                        <button aria-label="Previous view"><svg class="w-5 h-5" viewBox="0 0 20 20"><path d="M2 12L13 3l4-1-1 5-10 10z" fill="#ddd" stroke="#777" /><circle cx="4.500" cy="14.500" r="3" fill="#eee" stroke="#777" /><path d="M9 14l4-3.500v2h6v3h-6v2z" fill="#3a86ad" /></svg></button>
                        <button aria-label="Section view"><svg class="w-5 h-5" viewBox="0 0 20 20"><path d="M2 6q8-6 16-2v9l-5 2V9l-5 1v7l-6-1z" fill="#cfdbe2" stroke="#455e6d" /><path d="M2 6l6 1.500V17l-6-1zM13 6l5-2v9l-5 2z" fill="#5a9fc0" stroke="#274d61" /><path d="M3 12l4-4M3 15l4-4M14 12l3-4" stroke="#1f4257" /></svg></button>
                        <button aria-label="Dynamic annotation"><svg class="w-5 h-5" viewBox="0 0 20 20"><path d="M3 7l4-5h8l-3 5z" fill="#f6c66b" stroke="#a9701b" /><path d="M3 16L14 4l3 1-9 12z" fill="#ddd" stroke="#777" /><path d="M10 18l4-9 4 9M11.500 15h5" fill="none" stroke="#3a86ad" stroke-width="1.700" /></svg></button>
                        <button aria-label="View orientation"><svg class="w-5 h-5" viewBox="0 0 20 20"><path d="M6 2h12v12l-4 4H2V6z" fill="#fff" stroke="#555" /><path d="M2 7h11v11H2z" fill="#5ba5ca" stroke="#2d5f7b" /><path d="M13 7l5-5M6 2v5M13 11h5" stroke="#555" /></svg></button>
                        <svg class="w-2.5 h-[3px]"><use href="#caret" /></svg>
                        <button aria-label="Display style"><svg class="w-5 h-5" viewBox="0 0 20 20"><path d="M3 5l6-3 8 2v10l-7 4-7-3z" fill="#b8dbe9" stroke="#3d6b83" /><path d="M3 5l7 2v11l-7-3z" fill="#4b9abf" /><path d="M3 5l7 2 7-3M10 7v11" stroke="#3d6b83" fill="none" /></svg></button>
                        <svg class="w-2.5 h-[3px]"><use href="#caret" /></svg>
                        <button aria-label="Hide/show items"><svg class="w-5 h-5" viewBox="0 0 20 20"><path d="M1 10q9-9 18 0-9 8-18 0z" fill="#eee" stroke="#aaa" /><circle cx="10" cy="10" r="4" fill="#777" /><circle cx="10" cy="10" r="2" fill="#222" /><path d="M10 3v15" stroke="#555" /></svg></button>
                        <svg class="w-2.5 h-[3px]"><use href="#caret" /></svg>
                        <button aria-label="Edit appearance"><svg class="w-5 h-5" viewBox="0 0 20 20" fill="#e0e0e0" stroke="#c4c4c4"><circle cx="8" cy="8" r="6" /><path d="M8 16l9-9 2 2-8 9z" /></svg></button>
                        <button aria-label="Apply scene"><svg class="w-5 h-5" viewBox="0 0 20 20"><path d="M2 12h16v7H2z" fill="#333" /><path d="M4 14h3v2H4zM10 14h3v2h-3zM7 16.500h3V19H7zM13 16.500h3V19h-3z" fill="#fff" /><use href="#ball" x="3" y="1" width="14" height="14" /></svg></button>
                        <svg class="w-2.5 h-[3px]"><use href="#caret" /></svg>
                        <button aria-label="View settings"><svg class="w-5 h-5" viewBox="0 0 20 20"><path d="M1.500 3.500h17v10h-17z" fill="#dfe5e9" stroke="#555" stroke-width="1.300" /><path d="M10 13.500V17M6 17.500h8" stroke="#444" stroke-width="1.500" /></svg></button>
                        <svg class="w-2.5 h-[3px]"><use href="#caret" /></svg>
                    </div>
                </div>
                <p class="absolute left-2.5 bottom-0.5 font-bold">*Front</p>

                <!-- Task pane tabs -->
                <div class="absolute right-0 top-7 w-6 h-[157px] grid grid-rows-7 border-l border-t border-[#888] bg-[#d4d4d4] *:border-b *:border-[#888] *:flex *:items-center *:justify-center">
                    <button class="bg-white" aria-label="3DEXPERIENCE"><svg class="w-[18px] h-[18px]" viewBox="0 0 18 18"><circle cx="9" cy="9" r="8.500" fill="#1f587d" /><path d="M1 6q8-6 16 0" stroke="#75a9c6" fill="none" /><path d="M9 2v3M9 13v3M2.500 9h3M12.500 9h3M8 7l3 2-3 2z" stroke="#cfe2ee" fill="none" /></svg></button>
                    <button aria-label="Resources"><svg class="w-[18px] h-[18px]" viewBox="0 0 20 20"><path d="M4 9.500V18h12V9.500L10 4z" fill="#fff" stroke="#333" /><path d="M1 11l9-8.500 9 8.500" fill="none" stroke="#2c7da5" stroke-width="2.200" /><path d="M10 18v-6h3v6z" fill="#fff" stroke="#333" /></svg></button>
                    <button aria-label="Design library"><svg class="w-[18px] h-[18px]" viewBox="0 0 18 18" fill="#fff" stroke="#333"><path d="M2.500 5l5-3 8 1.500V14l-4 3-8-2z" /><path d="M2.500 5l3 .7V16M5.500 5.700l3 .6V16.500M8.500 6.300l3 .7v10M11.500 7l4-3.500M5.500 5.700l4.500-3M8.500 6.300l4.500-3" fill="none" /></svg></button>
                    <button aria-label="File explorer"><svg class="w-[18px] h-[18px]" viewBox="0 0 18 18"><path d="M1.500 15.500V3.500h5l1.500 2h6v2" fill="#bbb" stroke="#555" /><path d="M1.500 15.500L6 7.500h11.500L13 15.500z" fill="#f4f4f4" stroke="#555" /></svg></button>
                    <button aria-label="View palette"><svg class="w-[18px] h-[18px]" viewBox="0 0 18 18"><path d="M1.500 2.500h15v13h-15z" fill="#f7e27a" stroke="#5a4a10" /><path d="M3 4.500h8v3H3zM5 7.500v3H3v3h8v-3H9v-3M13 5v2h2V5zM12 10h3v5h-3z" fill="#fff" stroke="#333" /></svg></button>
                    <button aria-label="Appearances"><svg class="w-4 h-4"><use href="#ball" /></svg></button>
                    <button aria-label="Custom properties"><svg class="w-[18px] h-[18px]" viewBox="0 0 18 18"><path d="M1 1.500h16v15H1z" fill="#fff" stroke="#444" /><path d="M1 1.500h16v2.500H1z" fill="#2c7da5" /><path d="M3 6h3v2H3zM3 9.500h3v2H3zM3 13h3v2H3z" fill="#245f80" /><path d="M8 7h7M8 10.500h7M8 14h7" stroke="#333" stroke-width="1.200" /></svg></button>
                </div>
            </section>
        </div>
    </main>

    <!-- Model tabs -->
    <div class="h-4 shrink-0 flex border-t border-b border-[#999]">
        <div class="flex w-[62px] pl-0.5 text-[#999] *:flex-1 *:bg-[#b9b9b9] *:border *:border-[#a0a0a0] *:flex *:items-center *:justify-center">
            <button aria-label="First"><svg class="w-2 h-2" viewBox="0 0 8 8"><path d="M1 0h1v8H1zM7 0v8L3 4z" fill="currentColor" /></svg></button>
            <button aria-label="Previous"><svg class="w-2 h-2" viewBox="0 0 8 8"><path d="M6 0v8L2 4z" fill="currentColor" /></svg></button>
            <button aria-label="Next"><svg class="w-2 h-2" viewBox="0 0 8 8"><path d="M2 0v8l4-4z" fill="currentColor" /></svg></button>
            <button aria-label="Last"><svg class="w-2 h-2" viewBox="0 0 8 8"><path d="M6 0h1v8H6zM1 0v8l4-4z" fill="currentColor" /></svg></button>
        </div>
        <button class="w-[54px] pl-0.5 font-bold">Model</button>
        <button class="w-[63px] bg-[#d3d3d3] border-l border-[#888]">3D Views</button>
        <button class="w-[101px] bg-[#d3d3d3] border-l border-r border-[#888] pr-2">Motion Study 1</button>
    </div>

    <!-- Status bar -->
    <footer class="h-[17px] shrink-0 flex items-center pl-px">
        <span>SOLIDWORKS Premium 2021 SP0.0</span>
        <span class="ml-auto w-[71px]">104.65mm</span>
        <span class="w-[64px]">-14.64mm</span>
        <span class="w-[46px]">0mm</span>
        <span class="w-[88px]">Under Defined</span>
        <span class="w-[98px]">Editing Sketch1</span>
        <svg class="w-2 h-3"><use href="#traffic" /></svg>
        <svg class="w-[14px] h-[14px] ml-3" viewBox="0 0 14 14"><path d="M5 1l5 8H0z" fill="#f7c52f" stroke="#7a5a11" /><path d="M5 4v3" stroke="#222" /><path d="M8 10q4-1 3.500-6L9.500 5 11 1l3 3h-1.500q0 6-4 7z" fill="#222" /><path d="M0 12.500h10" stroke="#2c6cae" stroke-width="2" stroke-dasharray="2 1" /></svg>
        <span class="ml-[70px] w-[51px]">MMGS</span>
        <svg class="w-[5px] h-[3px] rotate-180"><use href="#caret" /></svg>
        <svg class="w-4 h-3.5 ml-6 mr-[3px]" viewBox="0 0 16 14"><path d="M1 4l6-3 8 5-5 7-8-6z" fill="#ccc" stroke="#444" /><circle cx="8" cy="6" r="2.500" fill="#eee" stroke="#444" /></svg>
    </footer>

    <!-- Windows taskbar -->
    <div class="h-[37px] shrink-0 flex bg-linear-to-r from-[#20363d] to-[#1b2642] text-white">
        <button class="w-[45px] flex items-center justify-center" aria-label="Start"><svg class="w-4 h-4" viewBox="0 0 16 16" fill="#fff"><path d="M0 2.300l6.500-.9v6.100H0zM7.300 1.300L16 0v7.500H7.300zM0 8.300h6.500v6.200L0 13.600zM7.300 8.300H16V16l-8.700-1.300z" /></svg></button>
        <label class="w-[322px] flex items-center bg-[#f2f2f2] text-[#444]">
            <svg class="w-[15px] h-[15px] ml-2.5" viewBox="0 0 15 15" fill="none" stroke="#333" stroke-width="1.300"><circle cx="9" cy="6" r="5" /><path d="M5.500 9.500L.5 14.500" /></svg>
            <input type="text" aria-label="Search" placeholder="Type here to search" class="flex-1 ml-3 text-sm outline-none placeholder:text-[#444]">
        </label>
        <div class="flex pl-0.5 *:w-[46px] *:flex *:items-center *:justify-center">
            <button aria-label="File Explorer"><svg class="w-5 h-[18px]" viewBox="0 0 20 18"><path d="M0 1h7l1.500 2H20v14H0z" fill="#f3c550" /><path d="M0 5h20v12H0z" fill="#fbdc7c" /><path d="M4 17v-6h12v6h-3v-3H7v3z" fill="#3f9bd8" /></svg></button>
            <button aria-label="Mail"><svg class="w-[22px] h-[18px]" viewBox="0 0 22 18"><path d="M0 7l11-7 11 7v11H0z" fill="#fff" /><path d="M2 7.500h18l-9 3.500 4 4z" fill="#20363d" /></svg></button>
            <button aria-label="Chrome"><svg class="w-5 h-5" viewBox="0 0 20 20"><circle cx="10" cy="10" r="10" fill="#f4c430" /><path d="M10 10L1.340 5A10 10 0 0 1 18.660 5z" fill="#dd4b3e" /><path d="M10 10v10A10 10 0 0 1 1.340 5z" fill="#2da15a" /><circle cx="10" cy="10" r="4.600" fill="#fff" /><circle cx="10" cy="10" r="3.600" fill="#3f7ee8" /></svg></button>
            <button aria-label="Teams"><svg class="w-[22px] h-5" viewBox="0 0 22 20"><circle cx="12.500" cy="3" r="3" fill="#7b83eb" /><circle cx="18.500" cy="4" r="2" fill="#5059c9" /><path d="M14 7h8v6q0 4-4 4z" fill="#5059c9" /><path d="M7 7h11v7q0 6-6 6-5 0-5-6z" fill="#7b83eb" /><path d="M0 5h11v11H0z" fill="#4b53bc" /><path d="M3 8h5M5.500 8v6" stroke="#fff" stroke-width="1.500" /></svg></button>
            <button aria-label="WhatsApp"><svg class="w-5 h-5" viewBox="0 0 20 20"><path d="M0 20l1.500-5A10 10 0 1 1 5 18.600z" fill="#fff" /><path d="M1.800 18.200l1-3.500a8.400 8.400 0 1 1 2.700 2.600z" fill="#2ec151" /><path d="M6 5.500c1-1 1.800-.3 2.300 1.700L7.500 8.500q1.200 2.400 3.700 3.500l1.200-1.300c1.300.5 2.700 1 2.300 2-1 2.800-4 2.200-6.500 0S4.500 7.500 6 5.500z" fill="#fff" /></svg></button>
            <button class="bg-[#4b5d66] border-b-2 border-[#76b9ed]" aria-label="SOLIDWORKS 2021"><svg class="w-6 h-6" viewBox="0 0 24 24"><path d="M1 4l8-3h14v16l-3 5H2z" fill="#8f1218" /><path d="M1 4l8-3h14l-3 4H1z" fill="#ec4a4a" /><path d="M1 5h18v16H2z" fill="#c91d24" /><g fill="#fff" font-family="Roboto" font-weight="700"><text x="2" y="14" font-size="11">S</text><text x="10" y="14" font-size="11">W</text><text x="4" y="23" font-size="9">2021</text></g></svg></button>
        </div>
        <div class="ml-auto flex items-center">
            <svg class="w-3 h-[7px]" viewBox="0 0 10 6"><path d="M1 5l4-4 4 4" fill="none" stroke="#fff" stroke-width="1.200" /></svg>
            <svg class="w-3 h-4 ml-2.5" viewBox="0 0 12 16"><path d="M3 0h6v10H3z" fill="#fff" /><path d="M1 8v4h10V8M6 12v3M3 15.500h6" fill="none" stroke="#fff" /></svg>
            <svg class="w-4 h-3 ml-2" viewBox="0 0 16 12"><path d="M5 4h9v6H5z" fill="#fff" stroke="#fff" /><path d="M15 5.500v3" stroke="#fff" stroke-width="2" /><path d="M1 1v3h4V1M3 4v4h2" fill="none" stroke="#fff" stroke-width="1.300" /></svg>
            <svg class="w-4 h-4 ml-2" viewBox="0 0 16 16" fill="none" stroke="#fff"><circle cx="7.500" cy="7.500" r="6.500" /><ellipse cx="7.500" cy="7.500" rx="3" ry="6.500" /><path d="M1 7.500h13M2 4h11M2 11h7" /><circle cx="12" cy="12" r="3.300" fill="#1b2642" /><path d="M10 10l4 4" /></svg>
            <svg class="w-4 h-3.5 ml-1.5" viewBox="0 0 16 14" fill="none" stroke="#fff"><path d="M1 5h2.500L7 1.500v11L3.500 9H1zM9 5q1.500 2 0 4M11 3q3 4 0 8" /><path d="M13 1.500q4 5.500 0 11" stroke="#8893a5" /></svg>
            <span class="ml-[9px] w-6 text-[11px]">ENG</span>
            <div class="w-[74px] flex flex-col gap-[5px] items-center text-[11px]"><span>21:35</span><span>29-09-2021</span></div>
            <button class="mr-[22px] ml-2" aria-label="Notifications"><svg class="w-4 h-4" viewBox="0 0 16 16"><path d="M.6 1h14.800v11.500H10L8 15l-2-2.500H.6z" fill="none" stroke="#fff" stroke-width="1.200" /></svg></button>
        </div>
    </div>
</body>

</html>
